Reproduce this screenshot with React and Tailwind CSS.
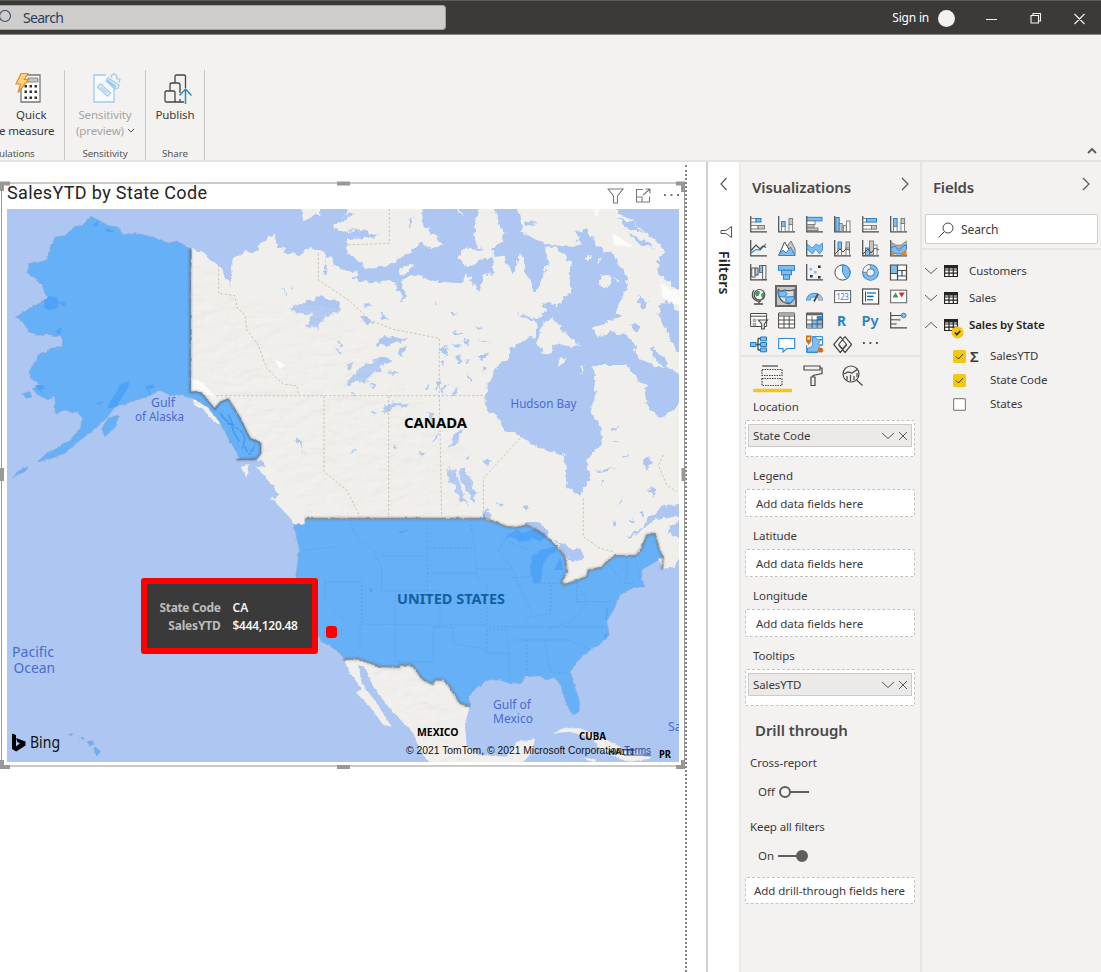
import React from "react";

const DARK = "#4a4a48";
const BLUE = "#2b88d8";
const SKY = "#7fbdf0";
const GRAY = "#c8c6c4";

const axis = <path d="M.7 0V15.8H17" fill="none" stroke={DARK} strokeWidth="1.2" />;
const bar = (x, y, w, h, f, s = f === SKY ? "#2478bd" : "#777", k = "") => (
  <rect key={`${x}-${y}${k}`} x={x} y={y} width={w} height={h} fill={f} stroke={s} strokeWidth=".9" />
);

const vizIcons = [
  <>{axis}{bar(1, 2.5, 5, 3.5, "#fff")}{bar(6, 2.5, 5, 3.5, SKY)}{bar(1, 9.5, 7, 3.5, "#fff")}{bar(8, 9.5, 6.5, 3.5, GRAY)}</>,
  <>{axis}{bar(3.5, 5.5, 3.6, 5, SKY)}{bar(3.5, 10.5, 3.6, 5, "#fff")}{bar(11, 2.5, 3.6, 6, GRAY)}{bar(11, 8.5, 3.6, 7, "#fff")}</>,
  <>{axis}{bar(1, 1.3, 15, 3.6, SKY)}{bar(1, 4.9, 8, 3.6, "#fff")}{bar(1, 8.5, 7, 2.6, GRAY)}{bar(1, 12, 11, 2.6, GRAY)}</>,
  <>{axis}{bar(1.8, 1.5, 3.4, 14, SKY)}{bar(5.2, 7.5, 3, 8, GRAY)}{bar(9.4, 9.5, 2.8, 6, "#fff")}{bar(12.6, 5, 3.4, 10.5, "#fff")}</>,
  <>{axis}{bar(1, 2.5, 3.5, 3.6, "#fff")}{bar(4.5, 2.5, 10, 3.6, SKY)}{bar(1, 9.5, 8.5, 3.6, "#fff")}{bar(9.5, 9.5, 5, 3.6, GRAY)}</>,
  <>{axis}{bar(3.5, 2.5, 3.6, 8, SKY)}{bar(3.5, 10.5, 3.6, 5, "#fff")}{bar(11, 2.5, 3.6, 5, GRAY)}{bar(11, 7.5, 3.6, 8, "#fff")}</>,
  <>{axis}<path d="M1 13L6 9.5 10 10 16 4" fill="none" stroke={BLUE} strokeWidth="1.2" /><path d="M1 10.5L6 5l4 4 3-3 3 1.5" fill="none" stroke={DARK} strokeWidth="1.2" /></>,
  <><path d="M8 8l5-7 4 8v6.5z" fill={GRAY} stroke="#777" /><path d="M1 15L6.500 2l8 13z" fill="#fff" stroke={DARK} /><path d="M.5 15.5L5 10l3 3 4.500-6L17 15.500z" fill={SKY} stroke={BLUE} /></>,
  <>{axis}<path d="M1 4l5 4 4-4 3 2 3.500-3v7l-3 4-4-5-3 5L1 9z" fill={SKY} stroke={BLUE} strokeWidth=".8" /></>,
  <>{axis}{bar(4, 2, 3.5, 8, SKY)}{bar(12, 2, 3.5, 7, GRAY)}{bar(4, 9, 3.5, 6.500, "#fff")}{bar(12, 8, 3.5, 7.500, "#fff")}<path d="M1 14L6 9l3 3 3-3 4 1" fill="none" stroke={DARK} /></>,
  <>{axis}{bar(7.500, 1, 4, 14, GRAY)}{bar(3.5, 8, 4, 7.500, SKY)}{bar(11.500, 5, 3.5, 10.500, "#fff")}<path d="M1 14L6 9l3 4 4-5 4 2" fill="none" stroke={DARK} /></>,
  <>{axis}<path d="M1 2l5 3h5l5.500-4v5l-4 3H5L1 7z" fill="#aaa" stroke="#777" strokeWidth=".6" /><path d="M1 8l4-2 4 5 4-5 3.500-1v4l-4 5H6L1 11z" fill={SKY} stroke={BLUE} /><path d="M1 12l4 1-1 2.500H1zM11 13l5.500-3v5.500H11z" fill="#e9821e" /></>,
  <>{axis}{bar(1.8, 4, 3.3, 9, "#fff", DARK)}{bar(5.1, 4, 3, 7, GRAY, DARK)}{bar(9.5, 1.500, 3.2, 7, SKY)}{bar(12.7, 1.500, 3.2, 14, "#fff", DARK)}</>,
  <><rect x=".5" y="1.5" width="16" height="4.800" fill={SKY} stroke={BLUE} /><rect x="3.500" y="6.300" width="10" height="4.500" fill={SKY} stroke={BLUE} /><rect x="5.500" y="10.800" width="6" height="4.500" fill={SKY} stroke={BLUE} /></>,
  <>{axis}<path d="M12 1.500h2.600v2.600H12zM4 11h2.600v2.600H4zM12 12h2.600v2.600H12z" fill="#333" /><path d="M3.500 4h2.600v2.600H3.500zM8 7h2.600v2.600H8z" fill={SKY} /></>,
  <><circle cx="8.500" cy="8.500" r="7.600" fill="#fff" stroke={DARK} /><path d="M8.500 8.500V.9a7.600 7.600 0 0 1 4 14z" fill={SKY} stroke={BLUE} /></>,
  <><circle cx="8.500" cy="8.500" r="5.800" fill="none" stroke="#2478bd" strokeWidth="5" /><circle cx="8.500" cy="8.500" r="5.800" fill="none" stroke={SKY} strokeWidth="3.400" /><path d="M2.700 8.500A5.800 5.800 0 0 1 8.500 2.700" fill="none" stroke="#777" strokeWidth="5" /><path d="M2.800 7.800A5.800 5.800 0 0 1 7.800 2.800" fill="none" stroke="#fff" strokeWidth="3.400" /></>,
  <><rect x=".5" y="1" width="16" height="15" fill="#fff" /><path d="M.5 1h7v8.500h-7z" fill={SKY} /><path d="M.5 1h16v15H.5zM7.500 1v15M.5 9.500h7M7.500 6.500h9M12 6.500V12M7.500 12H17" fill="none" stroke={DARK} strokeWidth="1.200" /></>,
  <><circle cx="9.500" cy="6.800" r="5.300" fill="#fff" stroke={DARK} strokeWidth="1.200" /><path d="M7 2.500l3 1-1 4-3 1-1-3zM11 6l3-2 .5 4-2.500 3z" fill="#3a9a58" /><path d="M4 2C0 8 4 14 11 13.200M9 13v3M4 16h9" fill="none" stroke={DARK} strokeWidth="1.300" /></>,
  <><path d="M.3 1.500c2 2 4 2 6 .5 2 1 7 1 9.900-.3v9.300c-2 2-3 4-5 4.800-4-.5-8-2-10-6.800-1-2-1.500-5-.9-7.500z" fill="#dedcda" stroke="#555" strokeWidth="1.200" /><path d="M.8 2.500c2 1.500 4 1 5.700.2L9 5.500 7 9l-6-.500zM8 9l8-.500v3L12 15l-4-1z" fill={SKY} stroke={BLUE} /></>,
  <><path d="M2.300 12.500a6.200 5.500 0 0 1 12.400 0" fill="none" stroke={BLUE} strokeWidth="4.500" /><path d="M2.300 12.500a6.200 5.500 0 0 1 12.400 0" fill="none" stroke={SKY} strokeWidth="3" /><path d="M12 8a6.200 5.500 0 0 1 2.700 4.500" fill="none" stroke="#bbb" strokeWidth="3.500" /><path d="M8 13.500L12 6" stroke={DARK} strokeWidth="1.800" /></>,
  <><rect x=".6" y="2.600" width="16" height="12" fill="#fff" stroke="#666" strokeWidth="1.100" /><text x="8.600" y="11.800" textAnchor="middle" fontSize="8" textLength="12.500" fontFamily="Noto Sans" fill={BLUE}>123</text></>,
  <><rect x=".6" y="1" width="16" height="15" fill="#fff" stroke={DARK} strokeWidth="1.200" /><path d="M3.500 3.500v10" stroke={DARK} /><path d="M5 5h9M5 11.800h6" stroke={BLUE} strokeWidth="1.500" /><path d="M5 8.400h6.500" stroke="#1a5f9e" strokeWidth="1.500" /></>,
  <><rect x=".6" y="2.200" width="16" height="12.500" fill="#fff" stroke="#777" strokeWidth="1.200" /><path d="M5.500 4.500l3 5h-6z" fill="#3a9a58" /><path d="M11.700 9.500l3-5h-6z" fill="#e02b2b" /></>,
  <><path d="M.6 1.500h16v13H.6zM.6 4.200h16" fill="#fff" stroke={DARK} /><path d="M3 7h3v2.500H3zM3 11h3v2.500H3z" fill="#bbb" stroke="#888" strokeWidth=".5" /><path d="M8.500 8h9l-3.200 4v5h-2.600v-5z" fill="#fff" stroke={DARK} strokeWidth="1.200" /></>,
  <><path d="M.6 1h16v15H.6zM.6 4h16M.6 8h16M.6 12h16M6 4v12M11.200 4v12" fill="#fff" stroke={DARK} /><path d="M1 2h15.500" stroke="#aaa" strokeWidth="2" /></>,
  <><path d="M.6 1h16v15H.6z" fill="#fff" stroke={DARK} /><path d="M6 8h5.500v8H1v-4h5zM11.500 5H16v11h-4.500z" fill={SKY} /><path d="M11.500 4h5v4h-5z" fill={BLUE} /><path d="M1 2.200h15.500" stroke="#666" strokeWidth="2.400" /><path d="M.6 8h16M.6 12h16M6 4v12M11.200 4v12" stroke={DARK} strokeWidth=".8" /></>,
  <text x="3" y="14" fontSize="14.500" fontWeight="700" fontFamily="Noto Sans" fill="#2b80bd" textLength="9" lengthAdjust="spacingAndGlyphs">R</text>,
  <text x="-.5" y="13.500" fontSize="15" fontWeight="600" fontFamily="Noto Sans" fill="#2b80bd" textLength="17" lengthAdjust="spacingAndGlyphs">Py</text>,
  <>{axis}<path d="M1 3.500h11M1 7.800h8M1 12h4" stroke={DARK} /><circle cx="13.700" cy="3.500" r="2.300" fill={SKY} stroke={BLUE} /><circle cx="9.500" cy="7.800" r="1.300" fill="#999" /><circle cx="5.500" cy="12" r="1.300" fill="#999" /></>,
  <><path d="M6 8.500h5M8 2.500v11.500M8 2.500h3M8 14h3" fill="none" stroke={DARK} strokeWidth="1.300" /><path d="M.5 6.500h5.500v4H.5zM10.500 1h6v3.800h-6zM10.500 6.500h6v4h-6zM10.500 12h6v3.800h-6z" fill={SKY} stroke="#2478bd" /></>,
  <path d="M.7 2.500h16v10H9l-4 3.500v-3.500H.7z" fill="#fff" stroke={BLUE} strokeWidth="1.100" />,
  <><path d="M6 .6h10.600v9M12 16.600H.6V9" fill="none" stroke={BLUE} /><path d="M6.500 1.500h3l2 2h4.500c-3 2-4 4-2 6-2 2-1 4-2 6.500H1.500V12c3 0 4-1 5-3z" fill={SKY} stroke={BLUE} strokeWidth=".8" /><path d="M0-.500h5.500V5L2.700 9 0 5z" fill="#d86e10" /><circle cx="2.700" cy="2.500" r="1.300" fill="#fff" /><circle cx="14.500" cy="14" r="2.600" fill="#d86e10" /><circle cx="15" cy="9" r="1.100" fill="#d86e10" /></>,
  <><path d="M5.500.300h6.500L17.600 8.500 12 16.700H5.500L-.300 8.500z" fill="#f8f8f7" /><path d="M6.300.600L-.200 8.500l6.500 8L12.500 9M11 .600l6.500 7.900-6.500 8L4.700 9M6.300.600l6.200 7.900L8.500 13M11 .600L4.700 8.500 8.500 13" fill="none" stroke={DARK} strokeWidth="1.200" strokeLinejoin="round" /></>,
  <path d="M1 7h1.800M7.500 7h1.800M14 7h1.800" stroke={DARK} strokeWidth="1.800" />,
];

const Chevron = ({ d, w = 12, h = 8, s = 1 }) => (
  <svg width={w} height={h} viewBox={`0 0 ${w} ${h}`} className="shrink-0 overflow-visible">
    <path d={d} fill="none" stroke="#5a5957" strokeWidth={s} />
  </svg>
);

function TitleBar() {
  return (
    <header className="flex h-[35px] items-start border-t border-b border-t-[#5c5c58] border-b-[#8a8886] bg-[#3b3a38] text-white">
      <div className="mt-1 flex h-[25px] w-[446px] items-center rounded-r-sm border border-l-0 border-[#a5a3a1] bg-[#cfcdcb] text-[14px] text-[#2a3d63]">
        <svg width="12" height="16" viewBox="0 0 12 16" className="mr-[11px]">
          <circle cx="5" cy="6" r="5.500" fill="none" stroke="#45546e" strokeWidth="1.200" />
        </svg>
        <span className="tracking-[-0.7px]">Search</span>
      </div>
      <div className="flex h-[34px] flex-1 items-center justify-end pr-[15px] text-[12px]">
        <span className="mr-[9px] tracking-[-0.2px]">Sign in</span>
        <span className="mr-[31px] size-[17px] rounded-full bg-[#f3f2f1]" />
        <svg width="100" height="14" viewBox="0 0 100 14" fill="none" stroke="#f3f2f1" strokeWidth="1.100">
          <path d="M0 8.500h11M45 4.500h7.500v7.500H45zM47 4.500v-2h7.500V10h-2M88.500 3l10 10M98.500 3l-10 10" />
        </svg>
      </div>
    </header>
  );
}

const ribbonLabel = "mt-[7px] text-[9.800px] tracking-[-0.1px] text-[#555]";

function Ribbon() {
  return (
    <section className="relative flex h-[127px] border-b-2 border-[#e4e3e1] bg-[#f3f2f1] pt-[35px] text-[11.500px] leading-[16px] text-[#3b3a39]">
      <div className="flex h-[90px] w-[65px] flex-col border-r border-[#cccac8]">
        <svg width="28" height="34" viewBox="0 0 28 34" className="ml-[15px] shrink-0">
          <path d="M8 5h17v27H6V18" fill="#fff" stroke="#777" strokeWidth="1.300" />
          <path d="M13 8h10v4H12z" fill="#c8c6c4" stroke="#888" />
          <path d="M9.500 15h2.500v2.500H9.500zM14.500 15H17v2.500h-2.500zM19.500 15H22v2.500h-2.500zM9.500 20.500h2.500V23H9.500zM14.500 20.500H17V23h-2.500zM19.500 20.500H22V23h-2.500zM9.500 26.500h2.500V29H9.500zM14.500 26.500H17V29h-2.500zM19.500 26.500H22V29h-2.500z" fill="#333" />
          <path d="M6 3.500h7L9.500 9.500h4L3 22.500l2.500-8.500H1z" fill="#ffd37a" stroke="#e58a2a" strokeWidth="1.200" />
        </svg>
        <div className="mt-[3px] pl-[16px]">Quick</div>
        <div className="-ml-[1px] whitespace-nowrap tracking-[-0.15px]">e measure</div>
        <div className="-ml-[1px] mt-[7px] text-[9.800px] tracking-[-0.15px] text-[#555]">ulations</div>
      </div>
      <div className="flex h-[90px] w-[81px] flex-col items-center border-r border-[#c8c6c4] text-[#a6a4a2]">
        <svg width="28" height="34" viewBox="0 0 28 34" fill="none" stroke="#9fcdec" strokeWidth="1.300" className="ml-1 shrink-0">
          <path d="M13 5H1v27h20V19" fill="#f7f9fb" />
          <path d="M4.500 17l3-3 10 9-3 3zM7.500 17l7 6" />
          <path d="M13 11l2-3 11 7-1 3-3 1zM19 8l-1-2 3-2.500 3 2.500-.5 2.500 3.500 1-1 3" />
          <path d="M14 10.500l9 6.500" strokeWidth="2.800" />
        </svg>
        <div className="mt-[3px] tracking-[-0.1px]">Sensitivity</div>
        <div className="flex items-center gap-1 whitespace-nowrap tracking-[-0.1px]">(preview) <Chevron d="M0 0l3 3 3-3" w={6} h={4} /></div>
        <div className={ribbonLabel}>Sensitivity</div>
      </div>
      <div className="flex h-[90px] w-[59px] flex-col items-center border-r border-[#c8c6c4]">
        <svg width="28" height="34" viewBox="0 0 28 34" fill="none" stroke="#444" strokeWidth="1.300" className="ml-[5px] shrink-0">
          <path d="M11 13V6.500q0-1.500 1.500-1.500H20q1.500 0 1.500 1.500V18M6 21v-6.500Q6 13 7.500 13H14q2 0 2 2v8M16 29v3M1 22.500q0-1.500 1.500-1.500h7q1.500 0 1.500 1.500V32H2.500Q1 32 1 30.500zM11 32h9" />
          <path d="M21.500 34V19M15.500 25.500l6-6.500 6 6.500" stroke="#2b88c8" strokeWidth="1.500" />
        </svg>
        <div className="mt-[3px] tracking-[-0.1px]">Publish</div>
        <div className="mt-[23px] text-[9.800px] tracking-[-0.1px] text-[#555]">Share</div>
      </div>
      <div className="ml-auto self-end pr-1 pb-[5px]"><Chevron d="M1 6l4-4 4 4" w={10} s={1.800} /></div>
    </section>
  );
}

const SEA = "#adc7f2";
const LAND = "#f0efeb";
const US_BORDER = "M-105 145H430L440 148 470 158 500 170 530 172 560 165 590 180 625 205 655 235 675 260 682 305 665 335 672 345 740 320 745 300 785 292 800 275 825 257H885L905 235 920 195 945 190 958 240 970 262 965 298M10 568L55 567 120 590 178 592 180 585H215L250 630 278 643 285 630H310L325 645 360 700 390 710";
const ALASKA_BORDER = "M571 252V682L588 680 605 685 645 733 660 712 685 702 715 750 735 790 750 820 782 835V865L770 882 710 884";

function MapText({ x, y, w, size = 12, fill = "#4a6bd0", weight = 400, children }) {
  return (
    <text x={x} y={y} fontSize={size} fill={fill} fontWeight={weight} fontFamily="Noto Sans, sans-serif" textLength={w} lengthAdjust="spacingAndGlyphs">
      {children}
    </text>
  );
}

function FilledMap() {
  return (
    <svg width="672" height="553" viewBox="7 209 672 553" className="block">
      <defs>
        <filter id="coast" x="-5%" y="-5%" width="110%" height="110%">
          <feTurbulence type="fractalNoise" baseFrequency="0.045" numOctaves="4" seed="4" />
          <feDisplacementMap in="SourceGraphic" scale="26" xChannelSelector="R" yChannelSelector="G" />
        </filter>
        <filter id="edge" x="-5%" y="-5%" width="110%" height="110%">
          <feTurbulence type="fractalNoise" baseFrequency="0.06" numOctaves="3" seed="8" />
          <feDisplacementMap in="SourceGraphic" scale="9" xChannelSelector="R" yChannelSelector="G" />
        </filter>
        <filter id="soft" x="-5%" y="-5%" width="110%" height="110%">
          <feGaussianBlur stdDeviation="2.500" />
        </filter>
        <filter id="relief" x="0" y="0" width="100%" height="100%">
          <feTurbulence type="fractalNoise" baseFrequency="0.020 0.035" numOctaves="4" seed="2" result="n" />
          <feDiffuseLighting in="n" surfaceScale="8" lightingColor="#ffffff" result="l">
            <feDistantLight azimuth="230" elevation="60" />
          </feDiffuseLighting>
          <feComposite in="l" in2="SourceGraphic" operator="in" />
        </filter>
      </defs>
      <rect x="7" y="209" width="672" height="553" fill={SEA} />
      <g transform="translate(0 165) scale(.33333)">
        <g filter="url(#coast)">
          <path fill={LAND} d="M570 252L600 258 625 280 650 300 672 318 690 362 697 330 690 290 735 255 765 265 775 240 800 228 820 205 840 245 865 270 910 265 935 245 970 265 1010 285 1040 300V120H2060V1150L2010 1205 1985 1205 1970 1160 1900 1220 1600 1300 1000 1100 885 1072 850 1030 815 1005 835 985 795 930 790 900 770 882 560 690z" />
          <path fill={SEA} d="M840 110H1030V300L1010 285 970 265 935 245 880 250 840 240z" />
          <path fill={LAND} d="M888 120L905 140 910 165 960 148 968 120zM1000 175L1040 150V205L1010 190z" />
        </g>
        <g filter="url(#coast)" fill={SEA} transform="translate(1020 0)">
          <path d="M250 120V185L275 205 310 240 280 250 240 235 200 270 150 300 80 310 60 290 15 265-20 255V305L50 320 45 345 90 355 150 345 165 360 195 412 190 340 240 330 290 350 365 355 375 325 415 380 430 340 455 320 460 280 415 285 390 310 350 280 375 250 430 260 405 225V170L420 120z" />
          <path d="M455 120L490 200 485 235 455 250 465 275 490 275 520 325 540 270 570 350 585 385 605 350 625 290 612 245 650 245 690 290V385L650 420 600 415 620 435 585 462 530 440 570 467 590 475 580 515 555 527 510 545V575L470 605 450 650 435 690 440 740 470 745 490 795 540 815 600 850 675 870 680 960 715 990 745 950 735 885 785 840V790L752 740 770 680 760 600 855 600 880 630 915 660 925 735 960 760 1000 740 1030 690V635L985 610 940 600 900 580 870 520 830 500 775 515 758 490 790 470 840 460 830 430 865 365 860 330 820 270 770 240 740 195 705 198 720 240 680 245 615 235 545 200 530 120z" />
          <path d="M800 110L850 150 900 190 960 240 975 270 950 290 960 330 1040 385V110zM950 430L1000 540 1040 600V450L980 405zM890 395L930 412 905 435zM870 470L905 490 880 505zM930 545L985 590 975 610 940 580z" />
          <path d="M830 160L875 172 910 205 870 188zM860 205L915 225 945 250 900 238zM560 165L585 178 550 185z" />
          <path d="M-20 205L70 195 115 215 70 222-20 218zM-20 160L45 145 20 160-20 172zM25 650L60 610 125 575 160 580 130 600 80 645 30 660zM125 740L150 712 210 720 160 730zM75 420L90 415 85 435zM110 540L130 510 200 525 170 535zM300 555L320 545 315 580zM340 500L370 510 345 510zM410 520L460 530 430 528zM335 690L355 660 345 695zM410 570L445 560 430 590zM320 850L355 800 370 795 345 840zM355 915L375 910 390 960 370 960zM325 910L345 920 350 960 330 950zM375 875L395 873 380 885zM905 890L925 875 940 895 920 910zM770 915L830 908 790 922zM810 795L845 780 825 798zM815 830L840 833 825 838zM845 875L870 863 855 880z" />
          <path d="M60 455L85 460 100 478 70 470zM120 440L135 450 150 470 130 462zM205 160L218 158 212 195zM277 403L290 410 288 420zM335 440L352 442 340 452zM338 535L360 538 350 550zM370 528L388 525 378 545zM350 575L362 570 352 600zM372 582L388 590 378 598zM300 590L315 585 308 608zM405 485L428 488 415 494zM430 600L440 605 430 622zM385 625L395 640 390 650zM145 620L180 622 158 632zM250 660L268 662 260 675zM285 655L300 650 292 680zM305 670L318 655 312 690zM20 600L45 590 30 610zM170 560L200 535 190 575zM95 740L112 742 105 755zM265 745L280 740 275 765zM275 830L298 800 290 822zM235 862L250 865 240 873zM160 840L172 850 165 858zM30 855L55 858 40 862zM430 885L455 880 445 905zM-5 530L8 535 0 545zM85 650L105 660 100 672zM30 685L48 683 40 693z" />
          <path d="M-145 425L-60 395-35 400 0 412-5 445-30 445-65 490-110 485-80 450-145 440zM-180 360L-160 385-165 390zM-145 365L-135 370-142 378zM-45 265L-40 330-45 325zM-130 810L-105 865-130 830zM-20 550L5 560 0 570z" />
        </g>
        <g filter="url(#coast)" fill={LAND} transform="translate(1020 0)">
          <path d="M630 458L690 515 715 540 690 545 650 535 625 565 590 545 600 500zM790 325L815 340 800 375 775 360zM645 600L655 580 685 575 665 600zM720 605L730 600 725 628zM180 310L225 300 210 320 175 330zM350 125L370 150 365 158zM375 325L395 340 385 358 370 350zM820 335L840 345 830 352zM770 285L785 280 778 295zM735 275L750 270 745 285z" />
        </g>
        <g fill={SEA} filter="url(#coast)" transform="translate(1020 915)">
          <path d="M320 0L350 5 365 60 380 105 360 90 345 45 325 25zM360 10L385 15 410 70 400 100 380 60zM675 -60L740 -60 745 30 715 80 685 30zM550 170L560 155 600 160 630 190 620 210zM650 215L715 235 730 260 705 275 670 260zM860 205L900 175 960 115 1040 90V140L960 145 910 170 870 210zM985 165L1040 150V215L1000 200zM785 30L795 35 788 45zM830 110L855 75 845 100zM930 50L950 65 935 85zM550 105L570 110 560 135zM430 125L445 115 450 145 435 148zM465 95L495 100 480 110zM895 125L915 128 905 138zM815 155L830 155 825 165zM870 155L882 150 878 163z" />
        </g>
        <g filter="url(#edge)">
          <path fill={LAND} d="M1030 1480L1100 1470 1260 1470 1400 1600 1408 1630 1395 1675 1400 1740 1435 1770 1520 1775 1550 1730 1605 1723 1595 1765 1560 1800H1290L1255 1745 1240 1705 1165 1625 1120 1565 1095 1505 1075 1500 1085 1555 1130 1615 1175 1685 1150 1680 1110 1625 1070 1585 1085 1570 1050 1525z" />
          <path fill={LAND} d="M1660 1705L1690 1690 1740 1690 1800 1715 1860 1745 1870 1760 1810 1760 1770 1715 1710 1700zM1835 1770L1890 1755 1955 1780 1890 1790 1860 1782zM1745 1775L1790 1785 1780 1795zM2010 1195L2037 1165V1180L2020 1210zM820 1005L850 1005 905 1055 885 1075zM722 905L745 900 740 940zM768 905L810 910 820 940 790 930z" />
        </g>
        <path filter="url(#relief)" opacity=".1" d="M570 262L650 320 700 400 1000 430 1420 870V1058H920L800 870 735 790 660 712 570 680zM1105 1500L1240 1510 1390 1640 1390 1740 1440 1790H1300L1250 1700 1170 1610z" />
        <g fill="none" stroke="#c9c2b8" strokeWidth="3" strokeDasharray="7 6">
          <path d="M656 300V385L705 392 712 430 735 450 740 495 775 540 800 610 850 658 890 662 897 692M610 692H1455M955 265V345L1045 405 1110 465 1180 493 1318 520V690L1325 1055M1166 692V1055M972 692V920L1040 975 1080 1055M1168 130V235L1030 240M1560 820L1450 940V1045M1750 1000V1115L1800 1150 1840 1160M1990 870L1975 900 2000 960 2030 980" />
        </g>
        <path fill="#fff" opacity=".75" filter="url(#edge)" d="M570 635L610 655 650 700 620 690 575 680zM820 580L855 600 840 612zM1840 205L1900 245 1840 240zM1980 355L2037 380V420L1990 400zM1780 135L1800 130 1790 155z" />
        <g fill="#65b0f7" stroke="#86abd6" strokeWidth="2" filter="url(#edge)">
          <path d="M571 252L548 238 530 228 505 235 478 222 440 212 405 203 370 209 350 185 325 182 300 168 273 154 258 170 245 184 225 184 195 212 165 216 152 240 148 262 140 285 115 293 86 295V310L80 322 105 340 128 365 135 385 145 400 125 412 90 430 48 456 75 475 85 500 120 512 150 508 165 515 182 510 188 530 185 547 150 550 140 565 122 562 105 590 90 615 92 640 118 658 100 670 115 690 145 705 165 695V745L195 735 235 745 248 760 240 790 215 820 180 845 135 870 112 890 150 882 200 862 240 825 275 800 320 760 345 725 380 715 410 705 440 695 480 676 510 690 550 692 590 705 625 730 655 765 675 800 690 830 700 845 720 882H770L782 865V835L750 820 735 790 715 750 685 702 660 712 645 733 605 685 588 680 571 682z" />
          <path d="M305 790L325 760 355 750 350 780 315 815zM65 687L90 680 95 695 80 700zM38 938L55 918 85 905 80 915 60 925z" />
          <path d="M205 1708L218 1706 215 1712zM238 1720L250 1717 252 1724zM258 1730L275 1727 283 1738 270 1740zM285 1745L302 1760 290 1772 280 1755z" />
        </g>
        <path fill="#4fa3f6" filter="url(#edge)" d="M130 425L135 405 155 390 172 398 175 408 198 412 192 425 175 412 168 432 145 435zM165 500L185 485 180 510zM320 725L350 680 360 660 390 645 385 665 370 690 350 725 330 730zM435 665L460 658 465 668 448 672 452 690zM105 660L130 660 135 672 122 675 132 692zM278 180L300 165 290 185zM315 190L345 200 320 202zM285 715L312 708 300 720z" />
        <g transform="translate(1020 915)">
          <path d="M-105 145H430L432 132 440 148 470 158 500 170 530 172 560 165 590 180 625 205 655 235 675 260 682 305 665 335 672 345 740 320 745 300 785 292 800 275 825 257H885L905 235 920 195 945 190 958 240 970 262 940 278 905 300V330L915 350 880 352 840 375 825 410 800 455 808 495 795 510 750 540 710 575 692 605 700 640 718 690V725L700 735 680 700 668 670 662 640 640 622 620 630 600 617 555 620 545 640 515 642 480 630 440 630 400 660 388 680 390 710 360 700 325 645 310 630H285L278 643 250 630 215 585H180L178 592 120 590 55 567 15 568 5 555-20 535-55 515-65 495-85 470-115 410-130 380-132 320-122 240-138 165H-105z" fill="#65b0f7" stroke="#86abd6" strokeWidth="2" filter="url(#edge)" />
          <path fill="#4fa3f6" filter="url(#edge)" d="M490 208L530 178 545 188 590 175 620 200 600 215 580 202 560 215 535 212 520 200zM572 265L605 237 645 230 652 243 630 255 610 275 600 340 580 340 570 300zM645 295L660 262 672 300 640 300zM175 185L215 178 180 190zM85 350L100 360 95 370zM800 410L808 420 795 460zM790 495L808 490 795 505z" />
          <g fill="none" stroke="#579bd9" strokeWidth="2" strokeDasharray="6 6">
            <path d="M30 150L45 190 60 210 100 240 125 290V362H262V150M125 257H258M258 233H400M390 150L405 235 410 320 440 345V475L500 480 510 555M262 310H410M262 362H300V470H280V575H165V362M-45 335H65V462L280 465H440M60 462V530L15 568M-110 240L0 230M-45 335V390L15 455M410 298H515M475 240L520 300 550 380 575 430 545 470H440M475 240L490 210 570 240M280 472H340V520L440 540V550H505L510 630M525 510H690M545 470L800 470M515 322H575M600 340H710L740 395 700 450 620 480M560 510V610M615 510L630 605 690 610M690 510L750 540M710 335V395H820M800 275L850 340H880M860 260V330M885 257L900 320M632 345V430L575 440M440 480V540" />
          </g>
          <g fill="none" strokeLinejoin="round">
            <path d={US_BORDER} stroke="#5d564e" strokeWidth="7" opacity=".4" filter="url(#soft)" />
            <path d={US_BORDER} stroke="#8f8478" strokeWidth="2" filter="url(#edge)" />
          </g>
        </g>
        <g fill="none" strokeLinejoin="round">
          <path d={ALASKA_BORDER} stroke="#47525e" strokeWidth="7" opacity=".45" filter="url(#soft)" />
          <path d={ALASKA_BORDER} stroke="#54728f" strokeWidth="2" />
          <path d="M660 745L680 765 695 780 700 800 718 830M685 750L700 780 725 800 735 820 728 850M735 845L745 870M765 840L750 870" stroke="#3f95e6" strokeWidth="3.500" filter="url(#edge)" />
        </g>
      </g>
      <MapText x="151" y="407" w="24">Gulf</MapText>
      <MapText x="135" y="421" w="49">of Alaska</MapText>
      <MapText x="510.500" y="408" w="66">Hudson Bay</MapText>
      <MapText x="404" y="428" w="63" size={13.500} fill="#000" weight={700}>CANADA</MapText>
      <MapText x="397" y="604" w="108" size={13.500} fill="#145f9f" weight={700}>UNITED STATES</MapText>
      <MapText x="12" y="657" w="42" size={13.500}>Pacific</MapText>
      <MapText x="13.500" y="673" w="41.500" size={13.500}>Ocean</MapText>
      <MapText x="493" y="709" w="38">Gulf of</MapText>
      <MapText x="493" y="723" w="40">Mexico</MapText>
      <MapText x="417" y="736" w="41.500" size={11} fill="#000" weight={700}>MEXICO</MapText>
      <MapText x="579" y="740" w="27" size={11} fill="#000" weight={700}>CUBA</MapText>
      <MapText x="608" y="755" w="26" size={9.500} fill="#333" weight={700}>HAITI</MapText>
      <MapText x="659" y="758" w="12" size={10.500} fill="#000" weight={700}>PR</MapText>
      <MapText x="668" y="731" w="26" size={13}>Sarg</MapText>
      <path d="M12 733.500l4 1.500v11.500l4-3.200-2.700-1.200-1.300-4 9.500 3.300v4L16.200 751.500 12 749z" fill="#000" />
      <MapText x="30" y="748" w="30" size={15.500} fill="#111">Bing</MapText>
      <g fontSize="10" fontFamily="Liberation Sans, sans-serif">
        <text x="406" y="753.500" textLength="216" lengthAdjust="spacingAndGlyphs" fill="#111">© 2021 TomTom, © 2021 Microsoft Corporation</text>
        <text x="624" y="753.500" textLength="27" fill="#32478f" textDecoration="underline">Terms</text>
      </g>
    </svg>
  );
}

function Canvas() {
  return (
    <main className="relative w-[706px] overflow-hidden bg-white pt-[20px]">
      <div className="absolute top-[3px] bottom-0 left-[685px] border-l-2 border-dotted border-[#858483]" />
      <div className="relative ml-[1px] h-[585px] w-[684px] border-2 border-r border-l border-[#cbcac9] border-x-[#999]">
        <div className="flex h-[25px] items-start justify-between pl-[5px]">
          <h1 className="mt-[-4px] font-[Roboto] text-[18px] leading-[26px] tracking-[0.35px] text-[#252423]">SalesYTD by State Code</h1>
          <svg width="74" height="22" viewBox="0 0 74 22" fill="none" stroke="#7b7a78" strokeWidth="1.100" className="mt-[1px] mr-[3px]">
            <path d="M1 4h15L10.500 11v7h-4v-7zM36 4.500h-6.500v12.500h13v-5.500M29.500 12h5.500v5M36 10l7-6M38.500 4H43v4.500" />
            <path d="M57 10h2M63.500 10h2M70 10h2" strokeWidth="2" />
          </svg>
        </div>
        <div className="pl-[5px]"><FilledMap /></div>
        <svg className="absolute -top-[3px] -left-[2px]" width="687" height="589" viewBox="0 0 687 589" fill="none" stroke="#999897" strokeWidth="4">
          <path d="M0 2.500h10M2 3v7M337 2.500h13M676 2.500h9M683 3v8M0 586h10M2 586v-7M337 586h13M676 586h9M683 586v-7M2 287v13M683.500 287v13" />
        </svg>
      </div>
      <div className="absolute top-[416px] left-[140.500px] flex h-[76px] w-[177px] flex-col justify-center rounded-[3px] border-[6px] border-[#fe0000] bg-[#3a3a3a] pt-px pl-px text-[12px] leading-[18px] font-bold text-[#bdbcbb]">
        <div className="flex"><span className="mr-[12px] w-[73px] text-right tracking-[-0.350px] whitespace-nowrap">State Code</span><span className="font-semibold text-[#f3f2f1]">CA</span></div>
        <div className="flex"><span className="mr-[12px] w-[73px] text-right tracking-[-0.200px]">SalesYTD</span><span className="font-semibold tracking-[-0.300px] text-[#f3f2f1]">$444,120.48</span></div>
      </div>
      <div className="absolute top-[464px] left-[326px] h-[12px] w-[11px] rounded-[3px] bg-[#fe0000]" />
    </main>
  );
}

function FiltersRail() {
  return (
    <aside className="flex w-[35px] flex-col items-center border-r-2 border-l-2 border-r-[#eceae8] border-l-[#d2d0ce] bg-white pt-[15px]">
      <Chevron d="M6.500 1L1 7l5.500 6" w={8} h={14} s={1.200} />
      <svg width="12" height="12" viewBox="0 0 12 12" className="mt-[35px] ml-1" fill="none" stroke="#555"><path d="M11.500 .5v11L6 7.500H1v-3h5z" /></svg>
      <span className="mt-[13px] text-[14px] leading-[18px] font-semibold tracking-[0.200px] text-[#252423] [writing-mode:vertical-rl]">Filters</span>
    </aside>
  );
}

const wellBox = "ml-[4px] w-[170px] rounded-[2px] border border-dashed border-[#c4c2c0] bg-white";

function Well({ label, value }) {
  return (
    <div className={value ? "h-[69px]" : "h-[60px]"}>
      <div className="h-[21px] pl-[12px] text-[11.500px] leading-[16px] tracking-[-0.050px]">{label}</div>
      {value ? (
        <div className={`${wellBox} h-[37px] p-[2px] pt-[3px]`}>
          <div className="flex h-[23px] items-center border border-[#cdcbc9] bg-[#ebeae8] pt-px pr-[4px] pl-[4px] text-[11.500px] tracking-[-0.100px]">
            <span className="flex-1">{value}</span>
            <Chevron d="M0 1l6 5.500L12 1" />
            <span className="w-[5px]" />
            <Chevron d="M0 0l8 8M8 0l-8 8" w={8} h={8} />
          </div>
        </div>
      ) : (
        <div className={`${wellBox} h-[28px] pl-[10px] text-[11.500px] leading-[27px] tracking-[-0.050px]`}>Add data fields here</div>
      )}
    </div>
  );
}

function Visualizations() {
  return (
    <aside className="w-[179px] bg-[#f3f2f1] text-[#3b3a39]">
      <div className="flex h-[50px] items-center justify-between pr-[11px] pl-[11px]">
        <h2 className="text-[15px] font-semibold tracking-[-0.100px] text-[#4a4947]">Visualizations</h2>
        <span className="mb-[6px]"><Chevron d="M1 1l6 6-6 6" w={8} h={14} s={1.200} /></span>
      </div>
      <div className="grid h-[145px] auto-rows-[24px] grid-cols-[repeat(6,28px)] border-b-2 border-[#e6e4e2] pl-[3px]">
        {vizIcons.map((icon, i) => (
          <div key={i} className={`flex items-center justify-center ${i === 19 ? "mx-[3px] my-[1px] border-2 border-[#666] bg-[#c8c6c4]" : ""}`}>
            <svg width="17" height="17" viewBox="0 0 17 17" className="shrink-0 overflow-visible">{icon}</svg>
          </div>
        ))}
      </div>
      <div className="h-[37px] pt-[7px] pl-[12px]">
        <svg width="110" height="30" viewBox="0 0 110 30" fill="none" stroke="#484644" strokeWidth="1.200">
          <path d="M9 2h16" /><path d="M9 5.500h20v6H9zM9 14.500h20v7H9z" strokeDasharray="1.500 1" />
          <path d="M51 2h16v4H51zM67 4h2v5.500l-9 2V13M58 13h4v8.500h-4z" />
          <circle cx="98" cy="10" r="8" /><path d="M103.500 16l6 5.500M91 10l4-2 4 1 6-4M94 16v-4M97.500 17v-6M101 16v-4M104 13v-4" />
          <path d="M1.500 26.500h36" stroke="#f2c811" strokeWidth="3.500" strokeLinecap="round" />
        </svg>
      </div>
      <div className="pt-[5px]">
        <Well label="Location" value="State Code" />
        <Well label="Legend" />
        <Well label="Latitude" />
        <Well label="Longitude" />
        <Well label="Tooltips" value="SalesYTD" />
      </div>
      <h2 className="mt-[3px] pl-[14px] text-[15px] leading-[20px] font-semibold tracking-[-0.080px] text-[#4a4947]">Drill through</h2>
      <div className="mt-[15px] pl-[9px] text-[11.500px] leading-[16px] tracking-[-0.050px]">Cross-report</div>
      <div className="mt-[13px] flex items-center gap-1 pl-[17px] text-[11.500px] leading-[16px]">
        Off<svg width="31" height="12" viewBox="0 0 31 12" fill="none" stroke="#605e5c" strokeWidth="2"><circle cx="6" cy="6" r="5" /><path d="M11 6h19" /></svg>
      </div>
      <div className="mt-[19px] pl-[9px] text-[11.500px] leading-[16px] tracking-[-0.100px]">Keep all filters</div>
      <div className="mt-[13px] flex items-center gap-1 pl-[17px] text-[11.500px] leading-[16px]">
        On<svg width="31" height="12" viewBox="0 0 31 12" fill="#605e5c" stroke="#605e5c" strokeWidth="2"><circle cx="24" cy="6" r="5" /><path d="M0 6h19" /></svg>
      </div>
      <div className={`${wellBox} mt-[13px] h-[27px] pl-[8px] text-[11.500px] leading-[25px] tracking-[-0.050px] whitespace-nowrap`}>Add drill-through fields here</div>
    </aside>
  );
}

function TableIcon({ checked }) {
  return (
    <svg width="20" height="20" viewBox="0 0 20 20" className="mr-[6px] ml-[7px] overflow-visible">
      <path d="M.6 4.500h12.800v11H.6zM.6 9h12.800M.6 12.200h12.800M5 6v9.500M9.300 6v9.500" fill="#fff" stroke="#252423" strokeWidth="1.200" />
      <path d="M0 4h14v3.500H0z" fill="#252423" />
      {checked && <><circle cx="13.500" cy="17.500" r="6" fill="#f2c811" /><path d="M10.800 17.500l2 2 3.500-3.500" fill="none" stroke="#252423" strokeWidth="1.600" /></>}
    </svg>
  );
}

function FieldRow({ label, checked, sigma }) {
  return (
    <div className="flex h-[24px] items-center pl-[31px]">
      <svg width="13" height="13" viewBox="0 0 13 13">
        <rect x=".6" y=".6" width="11.800" height="11.800" rx="1" fill={checked ? "#f2c811" : "#fff"} stroke={checked ? "#f2c811" : "#8a8886"} strokeWidth="1.200" />
        {checked && <path d="M3 6.500l2.500 2.500 4.500-5" fill="none" stroke="#3b3a39" />}
      </svg>
      <span className="w-[24px] pl-[4px] text-[15px] leading-[20px] font-semibold">{sigma ? "Σ" : ""}</span>
      <span className="text-[11.500px] tracking-[-0.100px]">{label}</span>
    </div>
  );
}

function Fields() {
  const tables = [["Customers"], ["Sales"], ["Sales by State", true]];
  return (
    <aside className="w-[181px] border-l-2 border-[#e6e4e2] bg-[#f3f2f1] text-[#3b3a39]">
      <div className="flex h-[50px] items-center justify-between pr-[11px] pl-[11px]">
        <h2 className="text-[15px] font-semibold tracking-[-0.200px] text-[#4a4947]">Fields</h2>
        <span className="mb-[6px]"><Chevron d="M1 1l6 6-6 6" w={8} h={14} s={1.200} /></span>
      </div>
      <div className="h-[38px] border-b-2 border-[#e6e4e2] px-[3px] pt-[2px]">
        <div className="flex h-[30px] items-center rounded-[2px] border border-[#d0cecc] bg-white pt-px pl-[12px] text-[12px]">
          <svg width="16" height="16" viewBox="0 0 16 16" fill="none" stroke="#484644" className="mr-[7px]"><circle cx="10" cy="6" r="5" /><path d="M6.500 9.500L.5 15.500" /></svg>
          <span className="tracking-[-0.100px]">Search</span>
        </div>
      </div>
      <div className="pt-[7px]">
        {tables.map(([name, open]) => (
          <div key={name} className="flex h-[27px] items-center pl-[3px]">
            <Chevron d={open ? "M0 7l6-5.500L12 7" : "M0 1l6 5.500L12 1"} />
            <TableIcon checked={open} />
            <span className={`ml-[-1px] text-[11.500px] tracking-[-0.100px] whitespace-nowrap ${open ? "font-semibold text-[#252423]" : ""}`}>{name}</span>
          </div>
        ))}
      </div>
      <div className="pt-[6px]">
        <FieldRow label="SalesYTD" checked sigma />
        <FieldRow label="State Code" checked />
        <FieldRow label="States" />
      </div>
    </aside>
  );
}

export default function App() {
  return (
    <div className="flex h-[972px] w-[1101px] flex-col overflow-hidden bg-white font-['Noto_Sans',sans-serif]">
      <TitleBar />
      <Ribbon />
      <div className="flex min-h-0 flex-1">
        <Canvas />
        <FiltersRail />
        <Visualizations />
        <Fields />
      </div>
    </div>
  );
}
